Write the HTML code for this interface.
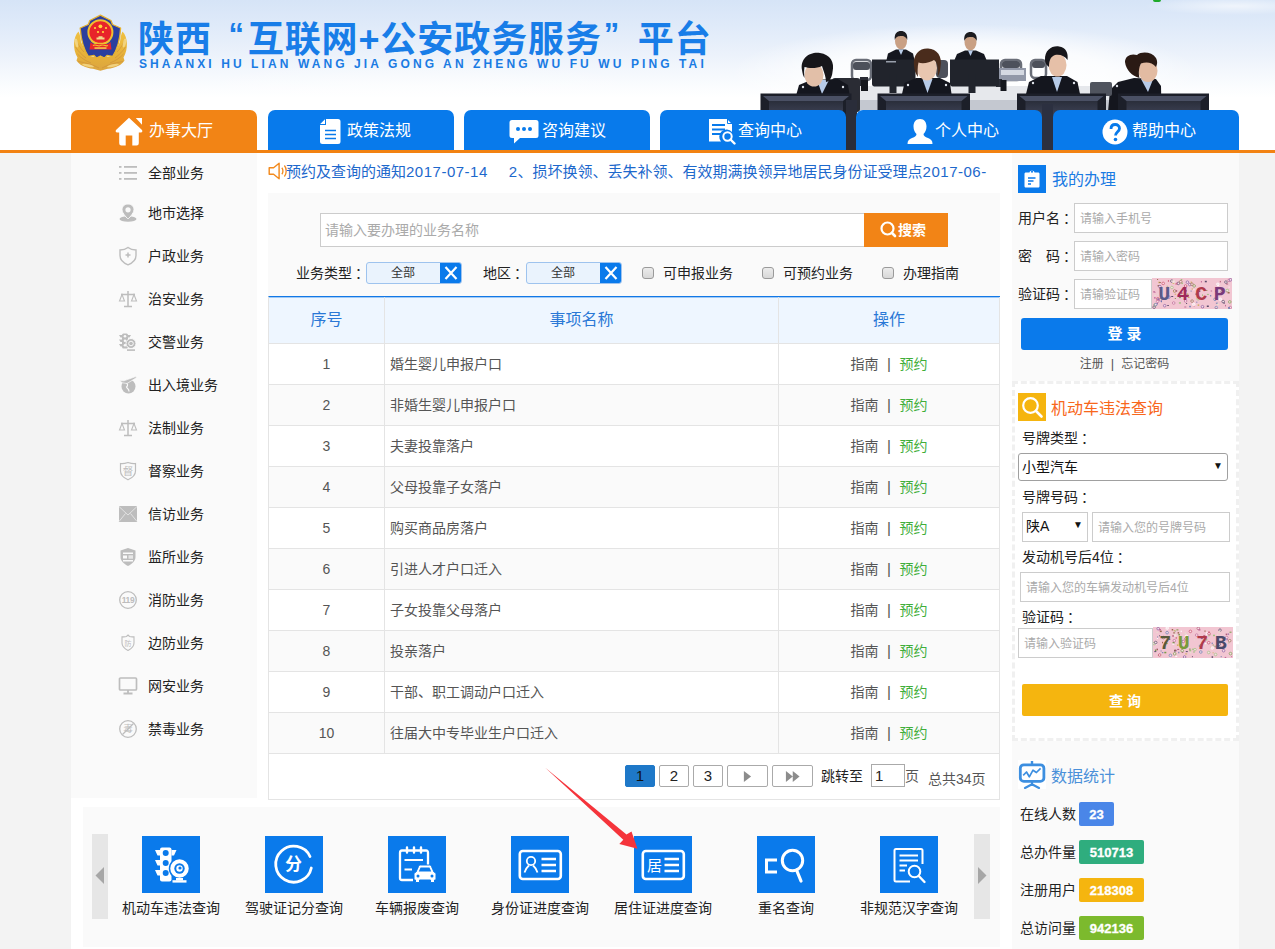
<!DOCTYPE html>
<html lang="zh-CN">
<head>
<meta charset="utf-8">
<title>陕西“互联网+公安政务服务”平台</title>
<style>
*{box-sizing:border-box;margin:0;padding:0}
html,body{width:1275px;height:949px;overflow:hidden}
body{background:#f3f3f3;font-family:"Liberation Sans","Noto Sans CJK SC",sans-serif;font-size:14px;color:#222;position:relative}
.abs{position:absolute}
/* header */
#hd{position:absolute;left:0;top:0;width:1275px;height:150px;background:linear-gradient(180deg,#d6e4f7 0,#dfeaf9 25px,#ecf2fb 55px,#fafcfe 85px,#ffffff 98px,#ffffff 150px);overflow:hidden}
#title .q{display:inline-block;width:36px;font-size:31px;position:relative;top:-7px;line-height:30px}
#title{position:absolute;left:138px;top:15px;font-size:36px;font-weight:bold;color:#187de8;letter-spacing:.9px;white-space:nowrap;line-height:50px}
#pinyin{position:absolute;left:139px;top:56px;font-size:12px;font-weight:bold;color:#1a7be3;letter-spacing:3.1px;white-space:nowrap;line-height:16px}
#oline{position:absolute;left:0;top:150px;width:1275px;height:3px;background:#f28212}
.tab{position:absolute;top:110px;width:186px;height:40px;background:#087aeb;border-radius:7px 7px 0 0;color:#fff;font-size:16px;line-height:40px;white-space:nowrap}
.tab.on{background:#f28415}
.tab span{position:absolute;top:1px}
.tab svg{position:absolute}
/* container */
#wrap{position:absolute;left:71px;top:153px;width:1168px;height:796px;background:#fff}
#side{position:absolute;left:71px;top:153px;width:186px;height:645px;background:#fafafa}
.sitem{position:absolute;left:77px;font-size:14px;line-height:20px;color:#222;white-space:nowrap}
.sico{position:absolute;left:47px;width:20px;height:20px}
/* main */
#mq{left:286px;top:161px;width:712px;height:22px;line-height:22px;font-size:15px;color:#1d68cc;white-space:nowrap;overflow:hidden}
#sbox{left:268px;top:193px;width:732px;height:104px;background:#fafafa}
#sinput{left:320px;top:213px;width:545px;height:34px;border:1px solid #ccc;background:#fff;color:#aaa;font-size:14px;line-height:32px;padding-left:4px}
#sbtn{left:864px;top:213px;width:84px;height:34px;background:#f28416;color:#fff;font-size:14px;font-weight:bold;line-height:34px}
.flab{top:262px;line-height:22px;font-size:14px;color:#222;white-space:nowrap}
.fsel{top:262px;width:96px;height:22px;border:1px solid #9ec3ee;background:#eaf3fd;border-radius:3px;font-size:12px;line-height:21px;color:#333;overflow:hidden}
.fsel span{position:absolute;left:0;top:0;width:72px;text-align:center}
.fsel i{position:absolute;right:-1px;top:-1px;width:22px;height:22px;background:#0a7aeb}
.cb{top:267px;width:12px;height:12px;border:1px solid #9a9a9a;border-radius:3px;background:linear-gradient(#ececec,#d8d8d8)}
#tbl{left:268px;top:296px;width:732px;border-top:1px solid #1278e6;border-left:1px solid #e4e4e4}
#tbl .th,#tbl .tr{display:flex;border-bottom:1px solid #e4e4e4}
#tbl .th{height:47px;box-shadow:inset 0 1px 0 rgba(18,120,230,.35);background:#eef6ff;color:#2a78d6;font-size:16px;line-height:46px;text-align:center}
#tbl .tr{height:41px;line-height:40px;font-size:14px;color:#555;background:#fff}
#tbl .tr.alt{background:#fafafa}
#tbl .c1{width:116px;border-right:1px solid #e4e4e4;text-align:center}
#tbl .c2{width:394px;border-right:1px solid #e4e4e4}
#tbl .tr .c2{padding-left:5px}
#tbl .c3{width:221px;border-right:1px solid #e4e4e4;text-align:center}
#tbl .c3 b{font-weight:normal;margin:0 8.500px;color:#555;font-size:15px}
#tbl .c3 em{font-style:normal;color:#3fae3a}
#pg{left:268px;top:754px;width:732px;height:46px;border:1px solid #e4e4e4;border-top:none;background:#fff;font-size:14px}
.pb{position:absolute;top:11px;height:22px;border:1px solid #aaa;border-radius:2px;background:#fff;text-align:center;line-height:20px;font-size:15px;color:#222}
.pb.on{background:#1e78c8;border-color:#1e78c8;color:#111}
.pb svg{margin-top:4.500px}
#pgin{left:602px;top:10px;width:34px;height:23px;border:1px solid #aaa;background:#fff;line-height:21px;padding-left:3px;font-size:15px;color:#222}
/* right */
#rside{left:1012px;top:153px;width:227px;height:796px;background:#fafafa}
.rtitle{font-size:16px;line-height:26px;white-space:nowrap}
.rlab{left:1018px;font-size:14px;line-height:22px;color:#222;white-space:nowrap}
.rlab2{left:1022px;font-size:14px;line-height:22px;color:#222;white-space:nowrap}
.rin{height:30px;border:1px solid #ccc;background:#fff;color:#aaa;font-size:12px;line-height:30px;padding-left:5px;white-space:nowrap;overflow:hidden}
.rsel{border:1px solid #ccc;background:#fff;color:#111;font-size:14px;line-height:26px;padding-left:3px;white-space:nowrap}
.rsel i{position:absolute;right:4px;top:-1px;font-style:normal;font-size:10px;color:#111}
#login{left:1021px;top:318px;width:207px;height:32px;background:#0a7aeb;border-radius:3px;color:#fff;font-size:15px;font-weight:bold;text-align:center;line-height:32px}
#query{left:1022px;top:684px;width:206px;height:32px;background:#f5b50f;border-radius:2px;color:#fff;font-size:14px;font-weight:bold;text-align:center;line-height:35px}
.dash{border:3px dashed #f0f0f0;background:#fff}
.badge{height:24px;border-radius:2px;color:#fff;font-size:13px;font-weight:bold;line-height:26px;text-align:center;-webkit-text-stroke:.3px #fff}
/* bottom */
#car{left:83px;top:807px;width:917px;height:140px;background:#fafafa}
.arr{top:834px;width:16px;height:85px;background:#e6e6e6}
.tl{top:897px;width:140px;text-align:center;font-size:14px;line-height:22px;color:#222;white-space:nowrap}
.co{position:relative;left:3px}
.dg{letter-spacing:.5px}
</style>
</head>
<body>
<div id="wrap"></div>
<div id="hd">
<!-- soft cloud texture -->
<div class="abs" style="left:0;top:0;width:1275px;height:110px;background:radial-gradient(ellipse 90px 9px at 1235px 6px,rgba(255,255,255,.6),rgba(255,255,255,0) 100%),radial-gradient(ellipse 260px 35px at 420px 95px,rgba(255,255,255,.5),rgba(255,255,255,0) 100%)"></div>
<div class="abs" style="left:1153px;top:0;width:8px;height:2px;background:#1faa2a;border-radius:0 0 4px 4px"></div>
<!-- emblem -->
<svg class="abs" style="left:72px;top:13px" width="58" height="60" viewBox="72 13 58 60">
 <defs><linearGradient id="gd" x1="0" y1="0" x2="0" y2="1"><stop offset="0" stop-color="#f0c040"/><stop offset=".6" stop-color="#e6b13a"/><stop offset="1" stop-color="#dba540"/></linearGradient></defs>
 <path d="M78.500 31.500 C73 37 72.500 49 77.500 57.500 L76.500 60.500 C79 65 86 68 93 68.800 L100.400 70.800 L107.800 68.800 C115 68 122 65 124.500 60.500 L123.500 57.500 C128.500 49 128 37 122.500 31.500 C121 34 120.500 38 120 42 L112.500 57 L88.500 57 L81 42 C80.500 38 80 34 78.500 31.500Z" fill="url(#gd)"/>
 <g stroke="#c98d3c" stroke-width=".8" fill="none" opacity=".75"><path d="M76 40C78 44 80 48 84 52M75.500 47C78 51 82 55 86 58M77.500 54C81 58 86 61 91 63M125 40C123 44 121 48 117 52M125.500 47C123 51 119 55 115 58M123.500 54C120 58 115 61 110 63M78 61.500C84 62.500 92 64 99 68M123 61.500C117 62.500 109 64 102 68"/></g>
 <g fill="#f6dc8e" opacity=".8"><ellipse cx="76.500" cy="43" rx="1.500" ry="4.500" transform="rotate(-12 76.500 43)"/><ellipse cx="124.500" cy="43" rx="1.500" ry="4.500" transform="rotate(12 124.500 43)"/><ellipse cx="88" cy="65.500" rx="6" ry="1.300" transform="rotate(12 88 65.500)"/><ellipse cx="113" cy="65.500" rx="6" ry="1.300" transform="rotate(-12 113 65.500)"/></g>
 <path d="M100.400 15.200 L111 20.500 L112.500 24.500 L120.600 28 C120 40 117 50 112.500 56.500 L107 55.500 L104.500 58 L100.400 56 L96.500 58 L94 55.500 L88.500 56.500 C84 50 81 40 80.200 28 L88.300 24.500 L89.800 20.500Z" fill="#2b3f9e" stroke="#e6b32f" stroke-width="1.300" stroke-linejoin="round"/>
 <circle cx="100.400" cy="32.300" r="12" fill="#e8242a" stroke="#f0c030" stroke-width="2"/>
 <path d="M90.500 42 L93 44 L108 44 L110.500 42 L111.500 49.500 L89.500 49.500Z" fill="#e8242a"/>
 <path d="M91.500 40.500 C96 44.500 105 44.500 109.500 40.500" stroke="#f0c030" stroke-width="1.500" fill="none"/>
 <path d="M93 45.500C96 43.500 98 47 100.400 45.500C103 43.500 105 47 108 45.500" stroke="#f0c030" stroke-width="1.100" fill="none"/>
 <rect x="94.500" y="47.300" width="12" height="1.500" fill="#f6d24a"/>
 <path d="M96.500 39.500V37.500H98.500V36.200H102.500V37.500H104.500V39.500Z" fill="#f3d98a"/>
 <g fill="#ffd83a"><circle cx="100.400" cy="26.300" r="1.900"/><circle cx="95" cy="28" r="1.100"/><circle cx="106" cy="28" r="1.100"/><circle cx="98" cy="32" r="1.100"/><circle cx="103" cy="32" r="1.100"/></g>
</svg>
<div id="title">陕西<span class="q" style="text-align:right;padding-right:3px">“</span>互联网+公安政务服务<span class="q" style="text-align:left;padding-left:2px">”</span>平台</div>
<div id="pinyin">SHAANXI HU LIAN WANG JIA GONG AN ZHENG WU FU WU PING TAI</div>
<svg class="abs" style="left:700px;top:0" width="575" height="150" viewBox="700 0 575 150">
 <defs>
  <linearGradient id="mon" x1="0" y1="0" x2="0" y2="1"><stop offset="0" stop-color="#2a2e3b"/><stop offset=".25" stop-color="#3b4052"/><stop offset="1" stop-color="#2f3446"/></linearGradient>
  <radialGradient id="glow" cx=".5" cy=".5" r=".5"><stop offset="0" stop-color="#fff" stop-opacity="1"/><stop offset=".6" stop-color="#fff" stop-opacity=".75"/><stop offset="1" stop-color="#fff" stop-opacity="0"/></radialGradient>
 </defs>
 <ellipse cx="965" cy="74" rx="235" ry="50" fill="url(#glow)"/>
 <!-- desk -->
 <path d="M852 86H1130V101H852Z" fill="#e6e8ec"/>
 <rect x="852" y="100" width="270" height="10" fill="#c4c8d0"/>
 <!-- back chairs -->
 <g fill="none" stroke="#6a6e78" stroke-width="2.500"><rect x="852" y="60" width="19" height="20" rx="4"/><rect x="1001" y="60" width="20" height="20" rx="4"/><rect x="1031" y="60" width="15" height="18" rx="4"/></g>
 <g fill="#4d515b"><rect x="853" y="62" width="17" height="8" rx="3"/><rect x="1002" y="61" width="18" height="7" rx="3"/><rect x="1032" y="61" width="13" height="7" rx="3"/><rect x="936" y="60" width="12" height="18" rx="4"/></g>
 <rect x="999" y="68" width="27" height="13" fill="#9298a8"/><rect x="1001" y="70" width="23" height="5" fill="#d5d9e2"/>
 <rect x="860" y="77" width="8" height="9" fill="#2a2d36"/><rect x="996" y="79" width="6" height="8" fill="#2a2d36"/>
 <!-- back men -->
 <g>
  <ellipse cx="901" cy="41" rx="6" ry="8.500" fill="#c9a084"/><path d="M894.800 40 C894 33 897.500 31 901 31 C904.500 31 908 33 907.200 40 C906 36.500 903.500 36 901 36 C898.500 36 896 36.500 894.800 40Z" fill="#1b1b1f"/>
  <path d="M886.500 60 L888 53.500 L896 49.500 L906 49.500 L913 53.500 L914.500 60Z" fill="#15171f"/><path d="M898.500 49.500L901 55L903.500 49.500Z" fill="#b9cdea"/>
  <ellipse cx="970.500" cy="42" rx="6" ry="8.500" fill="#c9a084"/><path d="M964.300 41 C963.500 34 967 32 970.500 32 C974 32 977.500 34 976.700 41 C975.500 37.500 973 37 970.500 37 C968 37 965.500 37.500 964.300 41Z" fill="#1b1b1f"/>
  <path d="M954.500 60 L957 54 L965 50.500 L976 50.500 L984 54 L986.500 60Z" fill="#15171f"/><path d="M968 50.500L970.500 56L973 50.500Z" fill="#b9cdea"/>
 </g>
 <!-- back monitors -->
 <g fill="#21242c"><path d="M872 59.500H915.500V84C915.500 86 914 86.500 912 86.500H875.500C873.500 86.500 872 86 872 84Z"/><rect x="889.500" y="74" width="7" height="19"/><path d="M950 59.500H999V84C999 86 997.500 86.500 995.500 86.500H953.500C951.500 86.500 950 86 950 84Z"/><rect x="968.500" y="74" width="7" height="19"/></g>
 <rect x="886" y="61" width="10" height="1.500" fill="#9aa0ac"/>
 <rect x="861" y="80" width="7" height="11" fill="#15171d"/><rect x="1000.500" y="80" width="6" height="11" fill="#15171d"/>
 <!-- chair behind woman 1 -->
 <rect x="832" y="78" width="28" height="34" rx="3" fill="#2a2c34"/>
 <!-- woman 1 -->
 <path d="M796.500 94 L799 85 L811 80 L838 79 L848 85 L849.500 94Z" fill="#14161e"/>
 <path d="M817 80L822 94L829 80Z" fill="#b7cbe8"/>
 <ellipse cx="814" cy="75" rx="9.500" ry="11.500" fill="#e2bfa8"/>
 <path d="M802 70 C800 58 810 51.500 820 53 C830 54.500 835 62 832.500 72 C832 78 829 82 826 82 C826 76 823 70 822 66 C816 69 808 68 804.500 67 C804 70 804 74 804.500 78 C803 76 802.500 73 802 70Z" fill="#17161a"/>
 <!-- woman 2 -->
 <path d="M902 94 L904.500 83 L916 78 L940 78 L950 83 L951.500 94Z" fill="#14161e"/>
 <path d="M922.500 79L927.500 93L932.500 79Z" fill="#b7cbe8"/>
 <ellipse cx="927" cy="68" rx="10" ry="12.500" fill="#e8c6b0"/>
 <path d="M914 66 C912.500 54 920 48 928 48.500 C937 49 942.500 56 940.500 67 C940 72 939 75 937.500 76.500 C938.500 68 937 62 934 60 C930 63 922 64 918.500 62.500 C917.500 66 917.500 72 918 77 C915.500 74 914.500 70 914 66Z" fill="#4a2c1c"/>
 <!-- woman 3 -->
 <path d="M1026 94 L1029 82 L1041 76 L1067 76 L1077.500 82 L1080 94Z" fill="#14161e"/>
 <path d="M1052 77L1057 92L1062 77Z" fill="#b7cbe8"/>
 <ellipse cx="1057.500" cy="65" rx="9" ry="11.500" fill="#e6c0a8"/>
 <path d="M1045 60 C1044.500 50 1052 45.500 1059 46.500 C1066 47.500 1068.500 53 1067.500 60 C1065 56 1060 54 1055 55 C1050.500 56.500 1049 61 1049 67 C1046.500 65 1045 63 1045 60Z" fill="#17161a"/>
 <!-- woman 4 -->
 <path d="M1108 112 L1110 90 L1118 82 L1134 78 L1156 79 L1161 86 L1161.500 112Z" fill="#14161e"/>
 <path d="M1141 79L1148 92L1153 79.500Z" fill="#b7cbe8"/>
 <ellipse cx="1148" cy="71" rx="9.500" ry="11" fill="#e2bba2"/>
 <path d="M1125 62 C1125 56 1131 53 1137 55 C1142 51 1152 52 1156 58 C1158 62 1157 65 1156 67 C1152 62 1146 61.500 1141 63.500 C1138.500 68 1138.500 74 1139.500 78 C1132 76 1126 70 1125 62Z" fill="#2a1a14"/>
 <!-- chair right -->
 <rect x="1090" y="82" width="22" height="14" rx="2" fill="#50545e"/>
 <!-- white shoulder dots -->
 <g fill="#dfe3ea"><circle cx="803" cy="87" r="1.200"/><circle cx="843" cy="87" r="1.200"/><circle cx="908" cy="85" r="1.200"/><circle cx="946" cy="85" r="1.200"/><circle cx="1033" cy="83" r="1.200"/><circle cx="1074" cy="83" r="1.200"/><circle cx="1117" cy="86" r="1.200"/></g>
 <!-- front monitors -->
 <g>
  <rect x="760.500" y="93.500" width="91" height="57" fill="#1c1f29"/><path d="M763 96H849L843 101H769Z" fill="#4a5064"/><rect x="769" y="101" width="74" height="50" fill="url(#mon)"/>
  <rect x="877.500" y="93.500" width="92.500" height="57" fill="#1c1f29"/><path d="M880 96H967.500L961.500 101H886Z" fill="#4a5064"/><rect x="886" y="101" width="75.500" height="50" fill="url(#mon)"/>
  <rect x="1017" y="93.500" width="89" height="57" fill="#1c1f29"/><path d="M1019.500 96H1103.500L1097.500 101H1025.500Z" fill="#4a5064"/><rect x="1025.500" y="101" width="72" height="50" fill="url(#mon)"/>
  <rect x="1118" y="93.500" width="91" height="57" fill="#1c1f29"/><path d="M1120.500 96H1206.500L1200.500 101H1126.500Z" fill="#4a5064"/><rect x="1126.500" y="101" width="74" height="50" fill="url(#mon)"/>
 </g>
 <rect x="846" y="100" width="11" height="50" fill="#2a2d3a"/>
 <rect x="1042" y="104" width="11" height="46" fill="#2c3040"/>
</svg>
<div class="tab on" style="left:71px"><svg style="left:44px;top:6.500px" width="28" height="29" viewBox="0 0 28 29"><path d="M14 .8 L27 13 Q28.200 15.600 25.500 15.600 L23.800 15.600 L23.800 26.300 Q23.800 28.500 21.600 28.500 L17.300 28.500 L17.300 18.500 L10.700 18.500 L10.700 28.500 L6.400 28.500 Q4.200 28.500 4.200 26.300 L4.200 15.600 L2.500 15.600 Q-.2 15.600 1 13Z" fill="#fff"/><path d="M20.800 1 L27 1 L27 7.800Z" fill="#fff"/></svg><span style="left:78px">办事大厅</span></div>
<div class="tab" style="left:268px"><svg style="left:51px;top:8px" width="22" height="27" viewBox="0 0 22 27"><path d="M7 1 L19 1 Q21.500 1 21.500 3.500 L21.500 23.500 Q21.500 26 19 26 L3.500 26 Q1 26 1 23.500 L1 7 L7 7Z M6 1.200 L1.200 6 L6 6Z" fill="#fff"/><g stroke="#087aeb" stroke-width="1.600"><path d="M6 12.500H17M6 16.500H17M6 20.500H17"/></g></svg><span style="left:79px">政策法规</span></div>
<div class="tab" style="left:464px"><svg style="left:45px;top:9px" width="30" height="26" viewBox="0 0 30 26"><path d="M3 1 H27 Q29.500 1 29.500 3.500 V16.500 Q29.500 19 27 19 H11 L5 24.500 V19 H3 Q.5 19 .5 16.500 V3.500 Q.5 1 3 1Z" fill="#fff"/><g fill="#087aeb"><circle cx="9" cy="10" r="2"/><circle cx="15" cy="10" r="2"/><circle cx="21" cy="10" r="2"/></g></svg><span style="left:78px">咨询建议</span></div>
<div class="tab" style="left:660px"><svg style="left:48px;top:8px" width="28" height="27" viewBox="0 0 28 27"><path d="M1 1 H19 L24 6 V14 A7 7 0 0 0 13 23.500 H1Z" fill="#fff"/><path d="M19.500 1 V5.500 H24" fill="none" stroke="#087aeb" stroke-width="1"/><g stroke="#087aeb" stroke-width="1.800"><path d="M4 7H17M4 11.500H17M4 16H13"/></g><circle cx="19.500" cy="18.500" r="4.200" fill="none" stroke="#fff" stroke-width="2"/><path d="M22.500 21.500 L26.500 25.500" stroke="#fff" stroke-width="2.400" stroke-linecap="round"/></svg><span style="left:78px">查询中心</span></div>
<div class="tab" style="left:856px"><svg style="left:50px;top:8px" width="28" height="27" viewBox="0 0 28 27"><path d="M14 1 C18.500 1 20.500 4.500 20.500 8.500 C20.500 12 19 14.500 17.500 16 C17.500 18 19 18.800 22 20 C25 21.200 26.500 22.500 26.500 26 L1.500 26 C1.500 22.500 3 21.200 6 20 C9 18.800 10.500 18 10.500 16 C9 14.500 7.500 12 7.500 8.500 C7.500 4.500 9.500 1 14 1Z" fill="#fff"/></svg><span style="left:79px">个人中心</span></div>
<div class="tab" style="left:1053px"><svg style="left:49px;top:9px" width="26" height="26" viewBox="0 0 26 26"><circle cx="13" cy="13" r="12.500" fill="#fff"/><path d="M9 10 C9 6.500 11 5.500 13.200 5.500 C15.500 5.500 17.500 7 17.500 9.500 C17.500 12.500 13.500 13 13.500 16.500" fill="none" stroke="#087aeb" stroke-width="2.800"/><circle cx="13.500" cy="20.500" r="1.800" fill="#087aeb"/></svg><span style="left:79px">帮助中心</span></div>
</div>

<div id="side"></div>
<svg class="abs" style="left:118px;top:163px" width="20" height="20" viewBox="0 0 20 20"><g fill="#bdbdbd"><rect x="1" y="3" width="2.500" height="1.800"/><rect x="1" y="9" width="2.500" height="1.800"/><rect x="1" y="15" width="2.500" height="1.800"/><rect x="6" y="3" width="13" height="1.800"/><rect x="6" y="9" width="13" height="1.800"/><rect x="6" y="15" width="13" height="1.800"/></g></svg><div class="sitem" style="left:148px;top:163px">全部业务</div>
<svg class="abs" style="left:118px;top:203px" width="20" height="20" viewBox="0 0 20 20"><ellipse cx="10" cy="16" rx="8.500" ry="2.800" fill="#bdbdbd"/><path d="M10 1C6.500 1 4 3.500 4 6.800C4 10.500 10 16 10 16C10 16 16 10.500 16 6.800C16 3.500 13.500 1 10 1Z" fill="#bdbdbd" stroke="#fafafa" stroke-width="1"/><circle cx="10" cy="6.800" r="2.600" fill="#fafafa"/></svg><div class="sitem" style="left:148px;top:203px">地市选择</div>
<svg class="abs" style="left:118px;top:246px" width="20" height="20" viewBox="0 0 20 20"><path d="M10 1.500C7.500 3.500 5 4 2 4V9.500C2 14 5.500 17 10 18.800C14.500 17 18 14 18 9.500V4C15 4 12.500 3.500 10 1.500Z" fill="none" stroke="#bdbdbd" stroke-width="1.400"/><path d="M10 6.500V11.500M7.500 9H12.500" stroke="#bdbdbd" stroke-width="1.500"/></svg><div class="sitem" style="left:148px;top:246px">户政业务</div>
<svg class="abs" style="left:118px;top:289px" width="20" height="20" viewBox="0 0 20 20"><g fill="none" stroke="#bdbdbd" stroke-width="1.500"><path d="M10 2V17M6 17.500H14M3 5.500H17"/><path d="M1.500 12L4 5.500L6.500 12Z" stroke-width="1.100"/><path d="M13.500 12L16 5.500L18.500 12Z" stroke-width="1.100"/></g></svg><div class="sitem" style="left:148px;top:289px">治安业务</div>
<svg class="abs" style="left:118px;top:332px" width="20" height="20" viewBox="0 0 20 20"><g fill="#bdbdbd"><rect x="4" y="1.500" width="6" height="15" rx="1.500"/><path d="M1 3H4V5.500H2.500ZM1 7.500H4V10H2.500ZM1 12H4V14.500H2.500ZM13 3H10V5.500H11.500Z"/></g><g fill="#fafafa"><circle cx="7" cy="4.200" r="1.300"/><circle cx="7" cy="8.800" r="1.300"/><circle cx="7" cy="13.200" r="1.300"/></g><circle cx="13" cy="11.500" r="5" fill="#bdbdbd" stroke="#fafafa" stroke-width="1"/><circle cx="13" cy="11.500" r="2.300" fill="none" stroke="#fafafa" stroke-width="1"/><rect x="9" y="17.300" width="8" height="1.600" fill="#bdbdbd"/></svg><div class="sitem" style="left:148px;top:332px">交警业务</div>
<svg class="abs" style="left:118px;top:375px" width="20" height="20" viewBox="0 0 20 20"><circle cx="10.500" cy="11.500" r="7" fill="#bdbdbd"/><path d="M8 8C10 8.500 10 11 8.500 12C9.500 14 11 14 11 16.500" stroke="#fafafa" stroke-width="1.200" fill="none"/><path d="M1 5.500L6 5.800L16.500 2C18 1.600 19 2.200 18 3L9 8.500L4.500 7.800Z" fill="#bdbdbd" stroke="#fafafa" stroke-width=".7"/></svg><div class="sitem" style="left:148px;top:375px">出入境业务</div>
<svg class="abs" style="left:118px;top:418px" width="20" height="20" viewBox="0 0 20 20"><g fill="none" stroke="#bdbdbd" stroke-width="1.500"><path d="M10 2V17M6 17.500H14M3 5.500H17"/><path d="M1.500 12L4 5.500L6.500 12Z" stroke-width="1.100"/><path d="M13.500 12L16 5.500L18.500 12Z" stroke-width="1.100"/></g></svg><div class="sitem" style="left:148px;top:418px">法制业务</div>
<svg class="abs" style="left:118px;top:461px" width="20" height="20" viewBox="0 0 20 20"><path d="M2.500 2.500C5 3 7 2.500 10 1.500C13 2.500 15 3 17.500 2.500V10C17.500 14 14 17 10 18.800C6 17 2.500 14 2.500 10Z" fill="none" stroke="#bdbdbd" stroke-width="1.200"/><text x="10" y="14" font-size="10.500" text-anchor="middle" fill="#bdbdbd" font-family="'Liberation Sans','Noto Sans CJK SC',sans-serif">督</text></svg><div class="sitem" style="left:148px;top:461px">督察业务</div>
<svg class="abs" style="left:118px;top:504px" width="20" height="20" viewBox="0 0 20 20"><rect x="1" y="2" width="18" height="16" fill="#bdbdbd"/><path d="M1 2.500L10 11L19 2.500M1 17.500L7.500 9.500M19 17.500L12.500 9.500" stroke="#e2e2e2" stroke-width="1" fill="none"/></svg><div class="sitem" style="left:148px;top:504px">信访业务</div>
<svg class="abs" style="left:118px;top:547px" width="20" height="20" viewBox="0 0 20 20"><path d="M10 1L17.500 3.500V10C17.500 14 14 17 10 19C6 17 2.500 14 2.500 10V3.500Z" fill="#bdbdbd"/><g fill="#fafafa"><rect x="5" y="5.500" width="10" height="1.500"/><rect x="5" y="8.500" width="4" height="3"/><rect x="10.500" y="8.500" width="4.500" height="1.200"/><rect x="10.500" y="10.300" width="4.500" height="1.200"/><rect x="5" y="13" width="10" height="1.500"/></g></svg><div class="sitem" style="left:148px;top:547px">监所业务</div>
<svg class="abs" style="left:118px;top:590px" width="20" height="20" viewBox="0 0 20 20"><circle cx="10" cy="10" r="8.300" fill="none" stroke="#bdbdbd" stroke-width="1.300"/><text x="10" y="13" font-size="8.500" font-weight="bold" letter-spacing="-.4" text-anchor="middle" fill="#bdbdbd" font-family="'Liberation Sans',sans-serif">119</text></svg><div class="sitem" style="left:148px;top:590px">消防业务</div>
<svg class="abs" style="left:118px;top:633px" width="20" height="20" viewBox="0 0 20 20"><path d="M10 2L11.500 3.500C13 4 14.500 4 16 3.800V10C16 13.500 13 16 10 17.500C7 16 4 13.500 4 10V3.800C5.500 4 7 4 8.500 3.500Z" fill="none" stroke="#bdbdbd" stroke-width="1.100"/><text x="10" y="12.500" font-size="7" text-anchor="middle" fill="#bdbdbd" font-family="'Liberation Sans','Noto Sans CJK SC',sans-serif">防</text></svg><div class="sitem" style="left:148px;top:633px">边防业务</div>
<svg class="abs" style="left:118px;top:676px" width="20" height="20" viewBox="0 0 20 20"><rect x="1.500" y="2" width="17" height="12" rx="1" fill="none" stroke="#bdbdbd" stroke-width="1.700"/><path d="M10 14V17M5.500 17.500H14.500" stroke="#bdbdbd" stroke-width="1.800"/></svg><div class="sitem" style="left:148px;top:676px">网安业务</div>
<svg class="abs" style="left:118px;top:719px" width="20" height="20" viewBox="0 0 20 20"><circle cx="10" cy="10" r="8.300" fill="none" stroke="#bdbdbd" stroke-width="1.300"/><text x="10" y="13.300" font-size="9.500" text-anchor="middle" fill="#bdbdbd" font-family="'Liberation Sans','Noto Sans CJK SC',sans-serif">毒</text><path d="M4.500 15.500L15.500 4.500" stroke="#bdbdbd" stroke-width="1.200"/></svg><div class="sitem" style="left:148px;top:719px">禁毒业务</div>
<svg class="abs" style="left:267px;top:161px" width="22" height="20" viewBox="0 0 20 18"><path d="M2 6H6L11 2V16L6 12H2Z" fill="none" stroke="#f28a1e" stroke-width="1.300" stroke-linejoin="round"/><path d="M13.500 6C14.800 7.500 14.800 10.500 13.500 12M15.800 4C18 6.500 18 11.500 15.800 14" fill="none" stroke="#f28a1e" stroke-width="1.200"/></svg>
<div class="abs" id="mq">预约及查询的通知<span class="dg">2017-07-14</span><span style="display:inline-block;width:21px"></span><span class="dg">2</span>、损坏换领、丢失补领、有效期满换领异地居民身份证受理点<span class="dg">2017-06-</span></div>
<div class="abs" id="sbox"></div>
<div class="abs" id="sinput">请输入要办理的业务名称</div>
<div class="abs" id="sbtn"><svg class="abs" style="left:16px;top:8px" width="17" height="17" viewBox="0 0 17 17"><circle cx="7.500" cy="7.500" r="6" fill="none" stroke="#fff" stroke-width="2.200"/><path d="M12 12L15 15" stroke="#fff" stroke-width="2.600" stroke-linecap="round"/></svg><span class="abs" style="left:34px;top:0">搜索</span></div>
<div class="abs flab" style="left:296px">业务类型<span class="co">：</span></div>
<div class="abs fsel" style="left:366px"><span>全部</span><i><svg width="22" height="22" viewBox="0 0 22 22"><path d="M5.500 5L16.500 17M16.500 5L5.500 17" stroke="#fff" stroke-width="2.200"/></svg></i></div>
<div class="abs flab" style="left:483px">地区<span class="co">：</span></div>
<div class="abs fsel" style="left:526px"><span>全部</span><i><svg width="22" height="22" viewBox="0 0 22 22"><path d="M5.500 5L16.500 17M16.500 5L5.500 17" stroke="#fff" stroke-width="2.200"/></svg></i></div>
<div class="abs cb" style="left:642px"></div><div class="abs flab" style="left:663px">可申报业务</div>
<div class="abs cb" style="left:762px"></div><div class="abs flab" style="left:783px">可预约业务</div>
<div class="abs cb" style="left:882px"></div><div class="abs flab" style="left:903px">办理指南</div>
<div class="abs" id="tbl"><div class="th"><div class="c1">序号</div><div class="c2">事项名称</div><div class="c3">操作</div></div>
<div class="tr"><div class="c1">1</div><div class="c2">婚生婴儿申报户口</div><div class="c3">指南<b>|</b><em>预约</em></div></div>
<div class="tr alt"><div class="c1">2</div><div class="c2">非婚生婴儿申报户口</div><div class="c3">指南<b>|</b><em>预约</em></div></div>
<div class="tr"><div class="c1">3</div><div class="c2">夫妻投靠落户</div><div class="c3">指南<b>|</b><em>预约</em></div></div>
<div class="tr alt"><div class="c1">4</div><div class="c2">父母投靠子女落户</div><div class="c3">指南<b>|</b><em>预约</em></div></div>
<div class="tr"><div class="c1">5</div><div class="c2">购买商品房落户</div><div class="c3">指南<b>|</b><em>预约</em></div></div>
<div class="tr alt"><div class="c1">6</div><div class="c2">引进人才户口迁入</div><div class="c3">指南<b>|</b><em>预约</em></div></div>
<div class="tr"><div class="c1">7</div><div class="c2">子女投靠父母落户</div><div class="c3">指南<b>|</b><em>预约</em></div></div>
<div class="tr alt"><div class="c1">8</div><div class="c2">投亲落户</div><div class="c3">指南<b>|</b><em>预约</em></div></div>
<div class="tr"><div class="c1">9</div><div class="c2">干部、职工调动户口迁入</div><div class="c3">指南<b>|</b><em>预约</em></div></div>
<div class="tr alt"><div class="c1">10</div><div class="c2">往届大中专毕业生户口迁入</div><div class="c3">指南<b>|</b><em>预约</em></div></div>
</div>
<div class="abs" id="pg">
<div class="pb on" style="left:356px;width:30px">1</div><div class="pb" style="left:390px;width:30px">2</div><div class="pb" style="left:424px;width:30px">3</div>
<div class="pb" style="left:458px;width:41px"><svg width="9" height="11" viewBox="0 0 10 12"><path d="M1 0L9 6L1 12Z" fill="#8c8c8c"/></svg></div>
<div class="pb" style="left:503px;width:41px"><svg width="15.500" height="11" viewBox="0 0 17 12"><path d="M1 0L8.500 6L1 12ZM8.500 0L16 6L8.500 12Z" fill="#8c8c8c"/></svg></div>
<div class="abs" style="left:552px;top:11px;line-height:22px;color:#222">跳转至</div>
<div class="abs" id="pgin">1</div>
<div class="abs" style="left:636px;top:11px;line-height:22px;color:#555">页</div>
<div class="abs" style="left:659px;top:14px;line-height:22px;color:#555">总共34页</div>
</div>
<div class="abs" id="rside"></div>
<div class="abs" style="left:1018px;top:165px;width:28px;height:28px;background:#0a7aeb"><svg width="28" height="28" viewBox="0 0 28 28"><path d="M8 7.500H11.500C11.500 5 16.500 5 16.500 7.500H20C21 7.500 21.500 8 21.500 9V21C21.500 22 21 22.500 20 22.500H8C7 22.500 6.500 22 6.500 21V9C6.500 8 7 7.500 8 7.500Z" fill="#fff"/><path d="M10 13H17.500M10 16H15.500M10 19H13" stroke="#0a7aeb" stroke-width="1.500"/><circle cx="14" cy="6.800" r="1" fill="#0a7aeb"/></svg></div>
<div class="abs rtitle" style="left:1052px;top:167px;color:#1a7be3">我的办理</div>
<div class="abs rlab" style="top:207px">用户名<span class="co">：</span></div><div class="abs rin" style="left:1074px;top:203px;width:154px">请输入手机号</div>
<div class="abs rlab" style="top:245px">密<span style="display:inline-block;width:14px"></span>码<span class="co">：</span></div><div class="abs rin" style="left:1074px;top:241px;width:154px">请输入密码</div>
<div class="abs rlab" style="top:283px">验证码<span class="co">：</span></div><div class="abs rin" style="left:1074px;top:279px;width:78px">请输验证码</div>
<svg class="abs" style="left:1152px;top:278px" width="80" height="31" viewBox="0 0 80 31"><rect width="80" height="31" fill="#f2c6d2"/><circle cx="26.3" cy="5.4" r="1.300" fill="#f7dfe6" stroke="#5a4a6a" stroke-width=".7"/><rect x="4.8" y="24.8" width="1" height="1.5" fill="#8a5aa0"/><rect x="5.5" y="15.7" width="1" height="1" fill="#e8e0d0"/><circle cx="33.6" cy="8.0" r="1.300" fill="#f7dfe6" stroke="#c84a6a" stroke-width=".7"/><rect x="34.1" y="25.0" width="1" height="1" fill="#5a4a6a"/><rect x="49.9" y="28.5" width="2" height="1.5" fill="#b05a7a"/><circle cx="77.1" cy="2.4" r="1.300" fill="#f7dfe6" stroke="#c06a9a" stroke-width=".7"/><rect x="23.6" y="5.2" width="1" height="1.5" fill="#c84a6a"/><rect x="64.7" y="6.2" width="2" height="1" fill="#9a6a50"/><circle cx="8.6" cy="21.7" r="1.300" fill="#f7dfe6" stroke="#8a5aa0" stroke-width=".7"/><rect x="5.6" y="7.0" width="2" height="1.5" fill="#9a6a50"/><rect x="37.3" y="27.8" width="1.5" height="1.5" fill="#6a7ab0"/><circle cx="63.0" cy="21.3" r="1.300" fill="#f7dfe6" stroke="#6a7ab0" stroke-width=".7"/><rect x="7.4" y="9.7" width="1.5" height="1.5" fill="#d0b060"/><rect x="36.0" y="18.7" width="1" height="1" fill="#c84a6a"/><circle cx="33.6" cy="23.0" r="1.300" fill="#f7dfe6" stroke="#c06a9a" stroke-width=".7"/><rect x="73.8" y="13.2" width="2" height="1" fill="#c84a6a"/><rect x="45.7" y="26.4" width="1.5" height="1.5" fill="#d0b060"/><circle cx="28.3" cy="15.4" r="1.300" fill="#f7dfe6" stroke="#a0c080" stroke-width=".7"/><rect x="6.4" y="3.7" width="1.5" height="1.5" fill="#d0b060"/><rect x="52.8" y="2.8" width="2" height="1.5" fill="#5a4a6a"/><circle cx="46.1" cy="20.8" r="1.300" fill="#f7dfe6" stroke="#a0c080" stroke-width=".7"/><rect x="23.2" y="12.2" width="2" height="1.5" fill="#b05a7a"/><rect x="74.4" y="11.3" width="2" height="1" fill="#a0c080"/><circle cx="5.6" cy="23.3" r="1.300" fill="#f7dfe6" stroke="#c06a9a" stroke-width=".7"/><rect x="58.6" y="12.5" width="1.5" height="1" fill="#c06a9a"/><rect x="36.0" y="16.9" width="1" height="1.5" fill="#c84a6a"/><circle cx="22.7" cy="13.0" r="1.300" fill="#f7dfe6" stroke="#9a6a50" stroke-width=".7"/><rect x="54.3" y="12.0" width="1" height="1" fill="#7a9a4a"/><rect x="14.7" y="7.7" width="1" height="1" fill="#a0c080"/><circle cx="65.8" cy="6.3" r="1.300" fill="#f7dfe6" stroke="#fff" stroke-width=".7"/><rect x="1.3" y="13.1" width="1.5" height="1.5" fill="#c06a9a"/><rect x="54.9" y="15.9" width="2" height="1" fill="#a0c080"/><circle cx="71.2" cy="23.6" r="1.300" fill="#f7dfe6" stroke="#5a4a6a" stroke-width=".7"/><rect x="63.2" y="12.4" width="1.5" height="1.5" fill="#7a9a4a"/><rect x="38.6" y="12.6" width="1" height="1" fill="#6a7ab0"/><circle cx="35.4" cy="4.2" r="1.300" fill="#f7dfe6" stroke="#8a5aa0" stroke-width=".7"/><rect x="5.1" y="1.0" width="1" height="1" fill="#9a6a50"/><rect x="48.9" y="3.0" width="1" height="1.5" fill="#c06a9a"/><circle cx="50.5" cy="28.7" r="1.300" fill="#f7dfe6" stroke="#8a5aa0" stroke-width=".7"/><rect x="29.4" y="4.6" width="1.5" height="1.5" fill="#a0c080"/><rect x="38.7" y="3.5" width="1" height="1.5" fill="#d0b060"/><circle cx="21.7" cy="25.0" r="1.300" fill="#f7dfe6" stroke="#c06a9a" stroke-width=".7"/><rect x="41.3" y="7.0" width="2" height="1.5" fill="#c06a9a"/><rect x="54.8" y="27.5" width="2" height="1.5" fill="#5a4a6a"/><circle cx="68.3" cy="21.2" r="1.300" fill="#f7dfe6" stroke="#fff" stroke-width=".7"/><rect x="41.4" y="27.3" width="1.5" height="1" fill="#c84a6a"/><rect x="43.2" y="15.6" width="2" height="1" fill="#8a5aa0"/><circle cx="64.3" cy="29.6" r="1.300" fill="#f7dfe6" stroke="#6a7ab0" stroke-width=".7"/><rect x="63.9" y="24.7" width="2" height="1" fill="#6a7ab0"/><rect x="41.4" y="11.3" width="1" height="1" fill="#fff"/><circle cx="37.8" cy="6.6" r="1.300" fill="#f7dfe6" stroke="#8a5aa0" stroke-width=".7"/><rect x="75.6" y="14.0" width="2" height="1.5" fill="#9a6a50"/><rect x="7.3" y="4.0" width="1.5" height="1" fill="#9a6a50"/><circle cx="16.9" cy="19.1" r="1.300" fill="#f7dfe6" stroke="#8a5aa0" stroke-width=".7"/><rect x="66.6" y="14.9" width="2" height="1.5" fill="#5a4a6a"/><rect x="7.6" y="20.2" width="1.5" height="1" fill="#a0c080"/><circle cx="70.3" cy="13.6" r="1.300" fill="#f7dfe6" stroke="#5a4a6a" stroke-width=".7"/><rect x="26.9" y="24.2" width="2" height="1.5" fill="#a0c080"/><rect x="32.3" y="28.5" width="2" height="1" fill="#c06a9a"/><circle cx="78.5" cy="1.8" r="1.300" fill="#f7dfe6" stroke="#8a5aa0" stroke-width=".7"/><rect x="71.6" y="24.4" width="1" height="1.5" fill="#5a4a6a"/><rect x="74.1" y="5.5" width="2" height="1" fill="#b05a7a"/><circle cx="2.1" cy="29.2" r="1.300" fill="#f7dfe6" stroke="#5a4a6a" stroke-width=".7"/><rect x="9.0" y="22.7" width="1" height="1.5" fill="#6a7ab0"/><rect x="65.4" y="7.1" width="1.5" height="1" fill="#fff"/><circle cx="40.1" cy="23.1" r="1.300" fill="#f7dfe6" stroke="#9a6a50" stroke-width=".7"/><rect x="21.2" y="13.2" width="1" height="1" fill="#d0b060"/><rect x="28.6" y="14.3" width="2" height="1.5" fill="#c84a6a"/><circle cx="11.2" cy="5.4" r="1.300" fill="#f7dfe6" stroke="#c84a6a" stroke-width=".7"/><rect x="2.5" y="13.8" width="1" height="1" fill="#c06a9a"/><rect x="14.4" y="14.7" width="2" height="1" fill="#c84a6a"/><circle cx="5.8" cy="20.8" r="1.300" fill="#f7dfe6" stroke="#c84a6a" stroke-width=".7"/><rect x="44.3" y="23.7" width="1" height="1" fill="#6a7ab0"/><rect x="15.9" y="2.2" width="1" height="1.5" fill="#c84a6a"/><circle cx="3.2" cy="26.9" r="1.300" fill="#f7dfe6" stroke="#7a9a4a" stroke-width=".7"/><rect x="35.6" y="18.8" width="2" height="1" fill="#d0b060"/><rect x="22.6" y="15.7" width="1.5" height="1" fill="#d0b060"/><circle cx="41.8" cy="26.4" r="1.300" fill="#f7dfe6" stroke="#fff" stroke-width=".7"/><rect x="73.0" y="26.9" width="1" height="1.5" fill="#c06a9a"/><rect x="33.5" y="12.4" width="1.5" height="1" fill="#5a4a6a"/><circle cx="19.8" cy="3.1" r="1.300" fill="#f7dfe6" stroke="#5a4a6a" stroke-width=".7"/><rect x="24.6" y="4.5" width="1" height="1.5" fill="#c06a9a"/><rect x="20.7" y="5.0" width="1.5" height="1" fill="#d0b060"/><circle cx="75.3" cy="12.5" r="1.300" fill="#f7dfe6" stroke="#a0c080" stroke-width=".7"/><rect x="13.7" y="20.4" width="1" height="1" fill="#d0b060"/><rect x="34.7" y="16.0" width="1.5" height="1.5" fill="#6a7ab0"/><circle cx="28.8" cy="3.7" r="1.300" fill="#f7dfe6" stroke="#9a6a50" stroke-width=".7"/><rect x="2.5" y="17.1" width="1.5" height="1" fill="#e8e0d0"/><rect x="26.9" y="19.1" width="2" height="1" fill="#7a9a4a"/><circle cx="77.8" cy="23.9" r="1.300" fill="#f7dfe6" stroke="#7a9a4a" stroke-width=".7"/><rect x="7.6" y="8.9" width="1" height="1.5" fill="#c06a9a"/><rect x="64.9" y="25.6" width="2" height="1.5" fill="#e8e0d0"/><circle cx="12.7" cy="27.7" r="1.300" fill="#f7dfe6" stroke="#8a5aa0" stroke-width=".7"/><rect x="39.6" y="10.5" width="1.5" height="1" fill="#d0b060"/><rect x="15.3" y="27.0" width="1.5" height="1" fill="#5a4a6a"/><circle cx="7.9" cy="8.6" r="1.300" fill="#f7dfe6" stroke="#8a5aa0" stroke-width=".7"/><rect x="67.8" y="2.9" width="1" height="1.5" fill="#b05a7a"/><rect x="27.5" y="17.0" width="1.5" height="1" fill="#b05a7a"/><circle cx="42.1" cy="7.9" r="1.300" fill="#f7dfe6" stroke="#7a9a4a" stroke-width=".7"/><rect x="76.6" y="8.6" width="1" height="1" fill="#fff"/><rect x="50.0" y="16.4" width="1" height="1.5" fill="#a0c080"/><circle cx="40.0" cy="6.2" r="1.300" fill="#f7dfe6" stroke="#9a6a50" stroke-width=".7"/><rect x="63.7" y="29.8" width="1" height="1" fill="#b05a7a"/><rect x="58.2" y="17.0" width="1" height="1.5" fill="#6a7ab0"/><circle cx="73.9" cy="4.1" r="1.300" fill="#f7dfe6" stroke="#5a4a6a" stroke-width=".7"/><rect x="34.7" y="15.4" width="1.5" height="1.5" fill="#d0b060"/><rect x="17.8" y="7.7" width="1" height="1" fill="#e8e0d0"/><circle cx="78.2" cy="29.5" r="1.300" fill="#f7dfe6" stroke="#c06a9a" stroke-width=".7"/><rect x="2.1" y="19.1" width="1.5" height="1.5" fill="#c06a9a"/><rect x="5.3" y="20.3" width="1.5" height="1.5" fill="#8a5aa0"/><circle cx="19.9" cy="9.5" r="1.300" fill="#f7dfe6" stroke="#a0c080" stroke-width=".7"/><rect x="15.5" y="8.8" width="1" height="1.5" fill="#9a6a50"/><rect x="76.0" y="29.2" width="2" height="1.5" fill="#6a7ab0"/><circle cx="3.7" cy="26.6" r="1.300" fill="#f7dfe6" stroke="#6a7ab0" stroke-width=".7"/><rect x="28.8" y="1.0" width="1.5" height="1" fill="#a0c080"/><rect x="22.8" y="20.0" width="1" height="1" fill="#7a9a4a"/><circle cx="21.6" cy="3.6" r="1.300" fill="#f7dfe6" stroke="#e8e0d0" stroke-width=".7"/><rect x="46.8" y="12.4" width="1.5" height="1.5" fill="#5a4a6a"/><rect x="19.2" y="18.0" width="2" height="1" fill="#5a4a6a"/><text x="12.2" y="22.3" font-size="20" font-weight="bold" text-anchor="middle" fill="#5a5a8a" font-family="'Liberation Mono',monospace">U</text><text x="30.8" y="22.3" font-size="20" font-weight="bold" text-anchor="middle" fill="#a02a5a" font-family="'Liberation Mono',monospace">4</text><text x="49.2" y="22.3" font-size="20" font-weight="bold" text-anchor="middle" fill="#b03a4a" font-family="'Liberation Mono',monospace">C</text><text x="67.8" y="22.3" font-size="20" font-weight="bold" text-anchor="middle" fill="#7a3a7a" font-family="'Liberation Mono',monospace">P</text></svg>
<div class="abs" id="login">登 录</div>
<div class="abs" style="left:1021px;top:354px;width:207px;text-align:center;font-size:12px;line-height:20px;color:#555">注册<span style="margin:0 7px;font-size:13px">|</span>忘记密码</div>
<div class="abs dash" style="left:1012px;top:381px;width:227px;height:360px"></div>
<div class="abs" style="left:1018px;top:393px;width:28px;height:28px;background:#f5b50f"><svg width="28" height="28" viewBox="0 0 28 28"><circle cx="12.500" cy="12.500" r="7.300" fill="none" stroke="#fff" stroke-width="2.200"/><path d="M18 18L23.500 23.500" stroke="#fff" stroke-width="2.600" stroke-linecap="round"/></svg></div>
<div class="abs rtitle" style="left:1051px;top:396px;color:#f8671c">机动车违法查询</div>
<div class="abs rlab2" style="top:427px">号牌类型<span class="co">：</span></div>
<div class="abs rsel" style="left:1018px;top:453px;width:210px;height:28px;border-color:#a0a0a0;border-radius:3px">小型汽车<i>▼</i></div>
<div class="abs rlab2" style="top:486px">号牌号码<span class="co">：</span></div>
<div class="abs rsel" style="left:1022px;top:512px;width:66px;height:30px">陕A<i>▼</i></div>
<div class="abs rin" style="left:1092px;top:512px;width:138px;font-size:12px">请输入您的号牌号码</div>
<div class="abs rlab2" style="top:546px">发动机号后4位<span class="co">：</span></div>
<div class="abs rin" style="left:1020px;top:572px;width:210px;font-size:12px">请输入您的车辆发动机号后4位</div>
<div class="abs rlab2" style="top:606px">验证码<span class="co">：</span></div>
<div class="abs rin" style="left:1018px;top:628px;width:135px;font-size:12px">请输入验证码</div>
<svg class="abs" style="left:1153px;top:627px" width="80" height="31" viewBox="0 0 80 31"><rect width="80" height="31" fill="#f2c6d2"/><circle cx="70.6" cy="23.7" r="1.300" fill="#f7dfe6" stroke="#8a5aa0" stroke-width=".7"/><rect x="31.4" y="10.5" width="1.5" height="1" fill="#fff"/><rect x="57.5" y="19.7" width="1" height="1.5" fill="#d0b060"/><circle cx="55.7" cy="15.7" r="1.300" fill="#f7dfe6" stroke="#c84a6a" stroke-width=".7"/><rect x="59.7" y="17.5" width="1" height="1" fill="#7a9a4a"/><rect x="3.4" y="4.9" width="1.5" height="1" fill="#e8e0d0"/><circle cx="66.2" cy="17.2" r="1.300" fill="#f7dfe6" stroke="#5a4a6a" stroke-width=".7"/><rect x="2.5" y="16.4" width="1" height="1.5" fill="#fff"/><rect x="1.3" y="24.1" width="2" height="1" fill="#5a4a6a"/><circle cx="42.0" cy="22.6" r="1.300" fill="#f7dfe6" stroke="#a0c080" stroke-width=".7"/><rect x="20.7" y="3.2" width="1.5" height="1" fill="#d0b060"/><rect x="60.0" y="7.7" width="2" height="1.5" fill="#a0c080"/><circle cx="67.0" cy="3.2" r="1.300" fill="#f7dfe6" stroke="#5a4a6a" stroke-width=".7"/><rect x="23.4" y="2.4" width="2" height="1" fill="#7a9a4a"/><rect x="47.8" y="10.6" width="2" height="1.5" fill="#8a5aa0"/><circle cx="45.3" cy="1.4" r="1.300" fill="#f7dfe6" stroke="#b05a7a" stroke-width=".7"/><rect x="38.9" y="29.2" width="1" height="1" fill="#5a4a6a"/><rect x="39.2" y="21.6" width="1.5" height="1.5" fill="#a0c080"/><circle cx="37.4" cy="4.4" r="1.300" fill="#f7dfe6" stroke="#c84a6a" stroke-width=".7"/><rect x="16.5" y="29.4" width="1.5" height="1" fill="#fff"/><rect x="36.8" y="24.8" width="1.5" height="1.5" fill="#e8e0d0"/><circle cx="17.4" cy="28.4" r="1.300" fill="#f7dfe6" stroke="#6a7ab0" stroke-width=".7"/><rect x="6.8" y="3.6" width="2" height="1.5" fill="#9a6a50"/><rect x="11.3" y="24.8" width="2" height="1.5" fill="#7a9a4a"/><circle cx="55.9" cy="7.7" r="1.300" fill="#f7dfe6" stroke="#a0c080" stroke-width=".7"/><rect x="31.7" y="5.6" width="1.5" height="1.5" fill="#e8e0d0"/><rect x="24.6" y="5.1" width="1.5" height="1.5" fill="#9a6a50"/><circle cx="10.4" cy="10.6" r="1.300" fill="#f7dfe6" stroke="#9a6a50" stroke-width=".7"/><rect x="59.6" y="25.3" width="1" height="1" fill="#d0b060"/><rect x="1.9" y="22.5" width="1.5" height="1.5" fill="#7a9a4a"/><circle cx="31.6" cy="30.0" r="1.300" fill="#f7dfe6" stroke="#8a5aa0" stroke-width=".7"/><rect x="7.0" y="27.8" width="1.5" height="1" fill="#fff"/><rect x="8.9" y="25.2" width="1.5" height="1" fill="#6a7ab0"/><circle cx="76.7" cy="13.7" r="1.300" fill="#f7dfe6" stroke="#9a6a50" stroke-width=".7"/><rect x="15.8" y="11.8" width="1.5" height="1" fill="#5a4a6a"/><rect x="32.2" y="26.4" width="2" height="1" fill="#d0b060"/><circle cx="7.3" cy="28.1" r="1.300" fill="#f7dfe6" stroke="#e8e0d0" stroke-width=".7"/><rect x="36.2" y="22.8" width="2" height="1.5" fill="#a0c080"/><rect x="4.8" y="27.9" width="1" height="1" fill="#a0c080"/><circle cx="33.4" cy="9.2" r="1.300" fill="#f7dfe6" stroke="#fff" stroke-width=".7"/><rect x="58.6" y="29.3" width="1.5" height="1.5" fill="#5a4a6a"/><rect x="19.6" y="15.0" width="2" height="1.5" fill="#7a9a4a"/><circle cx="14.1" cy="5.7" r="1.300" fill="#f7dfe6" stroke="#6a7ab0" stroke-width=".7"/><rect x="40.0" y="24.5" width="2" height="1" fill="#a0c080"/><rect x="71.7" y="29.9" width="1.5" height="1.5" fill="#c06a9a"/><circle cx="43.7" cy="8.1" r="1.300" fill="#f7dfe6" stroke="#c06a9a" stroke-width=".7"/><rect x="27.7" y="3.6" width="1" height="1.5" fill="#fff"/><rect x="64.1" y="6.9" width="1" height="1.5" fill="#e8e0d0"/><circle cx="33.3" cy="16.2" r="1.300" fill="#f7dfe6" stroke="#e8e0d0" stroke-width=".7"/><rect x="22.1" y="22.8" width="1.5" height="1.5" fill="#8a5aa0"/><rect x="76.5" y="4.7" width="2" height="1" fill="#7a9a4a"/><circle cx="22.1" cy="8.2" r="1.300" fill="#f7dfe6" stroke="#e8e0d0" stroke-width=".7"/><rect x="51.4" y="13.5" width="1.5" height="1" fill="#c06a9a"/><rect x="3.5" y="21.6" width="1.5" height="1.5" fill="#b05a7a"/><circle cx="6.7" cy="28.0" r="1.300" fill="#f7dfe6" stroke="#c84a6a" stroke-width=".7"/><rect x="67.7" y="29.2" width="1" height="1" fill="#6a7ab0"/><rect x="13.0" y="16.1" width="2" height="1" fill="#d0b060"/><circle cx="55.7" cy="25.5" r="1.300" fill="#f7dfe6" stroke="#a0c080" stroke-width=".7"/><rect x="7.6" y="23.5" width="1" height="1" fill="#6a7ab0"/><rect x="45.4" y="2.1" width="2" height="1.5" fill="#c06a9a"/><circle cx="49.9" cy="16.3" r="1.300" fill="#f7dfe6" stroke="#e8e0d0" stroke-width=".7"/><rect x="55.5" y="4.3" width="1" height="1.5" fill="#c84a6a"/><rect x="74.6" y="6.6" width="1.5" height="1" fill="#8a5aa0"/><circle cx="1.1" cy="16.6" r="1.300" fill="#f7dfe6" stroke="#a0c080" stroke-width=".7"/><rect x="22.7" y="10.2" width="1" height="1.5" fill="#c84a6a"/><rect x="19.3" y="8.2" width="1.5" height="1.5" fill="#b05a7a"/><circle cx="2.7" cy="15.5" r="1.300" fill="#f7dfe6" stroke="#5a4a6a" stroke-width=".7"/><rect x="51.5" y="3.4" width="1" height="1.5" fill="#9a6a50"/><rect x="18.7" y="2.0" width="1.5" height="1.5" fill="#9a6a50"/><circle cx="54.2" cy="6.7" r="1.300" fill="#f7dfe6" stroke="#fff" stroke-width=".7"/><rect x="58.7" y="15.6" width="1" height="1.5" fill="#6a7ab0"/><rect x="25.3" y="24.8" width="1" height="1.5" fill="#6a7ab0"/><circle cx="21.7" cy="26.8" r="1.300" fill="#f7dfe6" stroke="#7a9a4a" stroke-width=".7"/><rect x="75.3" y="15.4" width="1" height="1" fill="#a0c080"/><rect x="33.5" y="20.3" width="2" height="1" fill="#e8e0d0"/><circle cx="5.2" cy="1.7" r="1.300" fill="#f7dfe6" stroke="#8a5aa0" stroke-width=".7"/><rect x="12.1" y="2.5" width="1" height="1" fill="#e8e0d0"/><rect x="36.1" y="21.6" width="1.5" height="1" fill="#7a9a4a"/><circle cx="73.7" cy="10.5" r="1.300" fill="#f7dfe6" stroke="#c06a9a" stroke-width=".7"/><rect x="51.9" y="16.2" width="1.5" height="1" fill="#fff"/><rect x="52.8" y="12.0" width="1.5" height="1.5" fill="#a0c080"/><circle cx="14.2" cy="1.1" r="1.300" fill="#f7dfe6" stroke="#fff" stroke-width=".7"/><rect x="7.3" y="13.2" width="1" height="1" fill="#e8e0d0"/><rect x="28.8" y="24.8" width="1.5" height="1" fill="#b05a7a"/><circle cx="56.0" cy="6.7" r="1.300" fill="#f7dfe6" stroke="#c84a6a" stroke-width=".7"/><rect x="72.7" y="6.6" width="1.5" height="1.5" fill="#b05a7a"/><rect x="50.3" y="8.2" width="2" height="1.5" fill="#b05a7a"/><circle cx="30.3" cy="14.5" r="1.300" fill="#f7dfe6" stroke="#b05a7a" stroke-width=".7"/><rect x="21.0" y="22.7" width="2" height="1.5" fill="#9a6a50"/><rect x="22.2" y="28.8" width="2" height="1" fill="#fff"/><circle cx="59.2" cy="21.0" r="1.300" fill="#f7dfe6" stroke="#fff" stroke-width=".7"/><rect x="24.2" y="21.9" width="2" height="1" fill="#b05a7a"/><rect x="65.4" y="4.1" width="2" height="1.5" fill="#e8e0d0"/><circle cx="62.6" cy="27.5" r="1.300" fill="#f7dfe6" stroke="#a0c080" stroke-width=".7"/><rect x="11.4" y="15.4" width="1" height="1.5" fill="#d0b060"/><rect x="61.3" y="18.6" width="1.5" height="1.5" fill="#a0c080"/><circle cx="29.2" cy="23.7" r="1.300" fill="#f7dfe6" stroke="#7a9a4a" stroke-width=".7"/><rect x="40.9" y="12.4" width="1" height="1" fill="#e8e0d0"/><rect x="6.0" y="2.0" width="2" height="1.5" fill="#c06a9a"/><circle cx="77.5" cy="26.6" r="1.300" fill="#f7dfe6" stroke="#7a9a4a" stroke-width=".7"/><rect x="21.7" y="3.4" width="1" height="1.5" fill="#a0c080"/><rect x="78.1" y="29.2" width="1" height="1" fill="#c06a9a"/><circle cx="33.5" cy="19.0" r="1.300" fill="#f7dfe6" stroke="#5a4a6a" stroke-width=".7"/><rect x="19.3" y="16.6" width="2" height="1" fill="#fff"/><rect x="23.9" y="17.4" width="1.5" height="1.5" fill="#d0b060"/><circle cx="21.3" cy="13.7" r="1.300" fill="#f7dfe6" stroke="#c06a9a" stroke-width=".7"/><rect x="20.1" y="5.4" width="2" height="1" fill="#9a6a50"/><rect x="6.1" y="8.3" width="1" height="1" fill="#5a4a6a"/><circle cx="64.1" cy="19.9" r="1.300" fill="#f7dfe6" stroke="#b05a7a" stroke-width=".7"/><rect x="9.0" y="14.8" width="1" height="1.5" fill="#9a6a50"/><rect x="4.1" y="9.5" width="1" height="1" fill="#6a7ab0"/><circle cx="47.8" cy="25.0" r="1.300" fill="#f7dfe6" stroke="#6a7ab0" stroke-width=".7"/><rect x="73.6" y="11.8" width="1" height="1.5" fill="#8a5aa0"/><rect x="21.3" y="23.6" width="1" height="1" fill="#5a4a6a"/><circle cx="47.5" cy="19.0" r="1.300" fill="#f7dfe6" stroke="#6a7ab0" stroke-width=".7"/><rect x="3.9" y="10.9" width="1" height="1" fill="#fff"/><rect x="4.0" y="22.2" width="1" height="1" fill="#9a6a50"/><circle cx="32.9" cy="11.8" r="1.300" fill="#f7dfe6" stroke="#8a5aa0" stroke-width=".7"/><rect x="25.4" y="6.9" width="1.5" height="1.5" fill="#7a9a4a"/><rect x="32.8" y="24.1" width="2" height="1" fill="#5a4a6a"/><text x="12.2" y="22.3" font-size="20" font-weight="bold" text-anchor="middle" fill="#5a5a3a" font-family="'Liberation Mono',monospace">7</text><text x="30.8" y="22.3" font-size="20" font-weight="bold" text-anchor="middle" fill="#7a9a3a" font-family="'Liberation Mono',monospace">U</text><text x="49.2" y="22.3" font-size="20" font-weight="bold" text-anchor="middle" fill="#b03a4a" font-family="'Liberation Mono',monospace">7</text><text x="67.8" y="22.3" font-size="20" font-weight="bold" text-anchor="middle" fill="#4a4a6a" font-family="'Liberation Mono',monospace">B</text></svg>
<div class="abs" id="query">查 询</div>
<svg class="abs" style="left:1018px;top:760px" width="28" height="29" viewBox="0 0 28 29"><rect x="0" y="0" width="28" height="29" fill="#fff"/><path d="M14 1V4" stroke="#3d8fe0" stroke-width="2.400"/><rect x="2.300" y="4.800" width="23.600" height="16.600" rx="3.500" fill="none" stroke="#3d8fe0" stroke-width="2.800"/><path d="M5.200 15.300L8.500 12L11.300 16.800L15 10.200L18.400 12.500L22.600 8.300" fill="none" stroke="#3d8fe0" stroke-width="1.700" stroke-linejoin="round"/><path d="M14 22V25M14 24.300L7 28M14 24.300L21 28" stroke="#3d8fe0" stroke-width="2.200" stroke-linecap="round"/></svg>
<div class="abs rtitle" style="left:1051px;top:764px;color:#4a90d9">数据统计</div>
<div class="abs rlab2" style="left:1020px;top:803px">在线人数</div><div class="abs badge" style="left:1079px;top:802px;width:35px;background:#4a86e8">23</div>
<div class="abs rlab2" style="left:1020px;top:841px">总办件量</div><div class="abs badge" style="left:1079px;top:840px;width:65px;background:#2fad7e">510713</div>
<div class="abs rlab2" style="left:1020px;top:879px">注册用户</div><div class="abs badge" style="left:1079px;top:878px;width:65px;background:#f5b50f">218308</div>
<div class="abs rlab2" style="left:1020px;top:917px">总访问量</div><div class="abs badge" style="left:1079px;top:916px;width:65px;background:#7cba2d">942136</div>
<div class="abs" id="car"></div>
<div class="abs arr" style="left:92px"><svg width="16" height="85" viewBox="0 0 16 85"><path d="M12 33L3.500 41.500L12 50Z" fill="#a6a6a6"/></svg></div>
<div class="abs arr" style="left:974px"><svg width="16" height="85" viewBox="0 0 16 85"><path d="M4 33L12.500 41.500L4 50Z" fill="#a6a6a6"/></svg></div>
<svg class="abs" style="left:142px;top:836px" width="58" height="57" viewBox="0 0 58 57"><rect width="58" height="57" fill="#0a7aeb"/><g fill="#fff"><rect x="18" y="11.500" width="11.500" height="34" rx="2"/><path d="M13 14H18V19.500H15.500ZM13 24H18V29.500H15.500ZM13 34H18V39.500H15.500ZM34.500 14H29.500V19.500H32Z"/></g><g fill="#0a7aeb"><circle cx="23.700" cy="17" r="3"/><circle cx="23.700" cy="27" r="3"/><circle cx="23.700" cy="37" r="3"/></g><circle cx="37.500" cy="32.500" r="10" fill="#fff" stroke="#0a7aeb" stroke-width="1.500"/><circle cx="37.500" cy="32.500" r="5.200" fill="#0a7aeb"/><circle cx="37.500" cy="32.500" r="3.200" fill="#fff"/><circle cx="38" cy="32" r="1.600" fill="#0a7aeb"/><path d="M34 42H41V44.500H34Z" fill="#fff"/><rect x="30.500" y="44.200" width="14" height="2.400" fill="#fff"/></svg><div class="abs tl" style="left:101px">机动车违法查询</div>
<svg class="abs" style="left:265px;top:836px" width="58" height="57" viewBox="0 0 58 57"><rect width="58" height="57" fill="#0a7aeb"/><path d="M45 20.500A18 18 0 1 0 46.300 32" fill="none" stroke="#fff" stroke-width="2.800" stroke-linecap="round"/><text x="28.600" y="34.200" font-size="17" font-weight="bold" text-anchor="middle" fill="#fff" font-family="'Liberation Sans','Noto Sans CJK SC',sans-serif">分</text></svg><div class="abs tl" style="left:224px">驾驶证记分查询</div>
<svg class="abs" style="left:388px;top:836px" width="58" height="57" viewBox="0 0 58 57"><rect width="58" height="57" fill="#0a7aeb"/><path d="M40 29V17C40 15.300 39.500 14.500 38 14.500H14C12.500 14.500 12 15.300 12 17V42C12 43.500 12.500 44 14 44H25" fill="none" stroke="#fff" stroke-width="2.300"/><path d="M19 11.500V16.500M26 11.500V16.500M33 11.500V16.500" stroke="#fff" stroke-width="2.400" stroke-linecap="round"/><path d="M16.500 24H35M16.500 33.500H24" stroke="#fff" stroke-width="2"/><path d="M28 36L30.500 30.500C31 29.500 31.500 29 32.500 29H41.500C42.500 29 43 29.500 43.500 30.500L46 36C47.500 36.500 48 37 48 38.500V44H46.500V46.500H42.500V44H31.500V46.500H27.500V44H26V38.500C26 37 26.500 36.500 28 36Z" fill="#fff" stroke="#0a7aeb" stroke-width="1"/><path d="M30.800 35.500L32.500 31.500H41.500L43.200 35.500Z" fill="#0a7aeb"/><circle cx="30" cy="40" r="1.500" fill="#0a7aeb"/><circle cx="44" cy="40" r="1.500" fill="#0a7aeb"/></svg><div class="abs tl" style="left:347px">车辆报废查询</div>
<svg class="abs" style="left:511px;top:836px" width="58" height="57" viewBox="0 0 58 57"><rect width="58" height="57" fill="#0a7aeb"/><rect x="8.800" y="15" width="41" height="28" rx="3" fill="none" stroke="#fff" stroke-width="2.600"/><circle cx="20" cy="25" r="4.200" fill="none" stroke="#fff" stroke-width="1.800"/><path d="M13.500 36.500C15 31.500 17 30.500 18 29.500M26.500 36.500C25 31.500 23 30.500 22 29.500" fill="none" stroke="#fff" stroke-width="1.800"/><path d="M30.500 23H45M30.500 29H45M30.500 35H45" stroke="#fff" stroke-width="2.500"/></svg><div class="abs tl" style="left:470px">身份证进度查询</div>
<svg class="abs" style="left:634px;top:836px" width="58" height="57" viewBox="0 0 58 57"><rect width="58" height="57" fill="#0a7aeb"/><rect x="8.800" y="15" width="41" height="28" rx="3" fill="none" stroke="#fff" stroke-width="2.600"/><text x="20.500" y="35" font-size="15" text-anchor="middle" fill="#fff" font-family="'Liberation Sans','Noto Sans CJK SC',sans-serif">居</text><path d="M30.500 23H45M30.500 29H45M30.500 35H45" stroke="#fff" stroke-width="2.500"/></svg><div class="abs tl" style="left:593px">居住证进度查询</div>
<svg class="abs" style="left:757px;top:836px" width="58" height="57" viewBox="0 0 58 57"><rect width="58" height="57" fill="#0a7aeb"/><path d="M20 24H9.500V36H20" fill="none" stroke="#fff" stroke-width="3"/><circle cx="35.500" cy="24.500" r="10.200" fill="none" stroke="#fff" stroke-width="3"/><path d="M39.500 34L44 45" stroke="#fff" stroke-width="3.200" stroke-linecap="round"/></svg><div class="abs tl" style="left:716px">重名查询</div>
<svg class="abs" style="left:880px;top:836px" width="58" height="57" viewBox="0 0 58 57"><rect width="58" height="57" fill="#0a7aeb"/><path d="M42.500 28V14.500C42.500 13.500 42 13 41 13H16C15 13 14.500 13.500 14.500 14.500V44C14.500 45 15 45.500 16 45.500H30" fill="none" stroke="#fff" stroke-width="2"/><path d="M19.500 19.500H38M19.500 24.500H38M19.500 29.500H27M19.500 34.500H25" stroke="#fff" stroke-width="2"/><circle cx="34.500" cy="35.500" r="5.800" fill="none" stroke="#fff" stroke-width="2"/><path d="M38.800 40L44.500 46" stroke="#fff" stroke-width="2.400" stroke-linecap="round"/></svg><div class="abs tl" style="left:839px">非规范汉字查询</div>
<svg class="abs" style="left:540px;top:762px" width="104" height="92" viewBox="540 762 104 92"><path d="M545 767.500L626.500 834.500L631.500 831.500L637.500 848.800L619.300 844L623.300 839.800Z" fill="#f5343b"/></svg>
<div id="oline"></div>
</body>
</html>
